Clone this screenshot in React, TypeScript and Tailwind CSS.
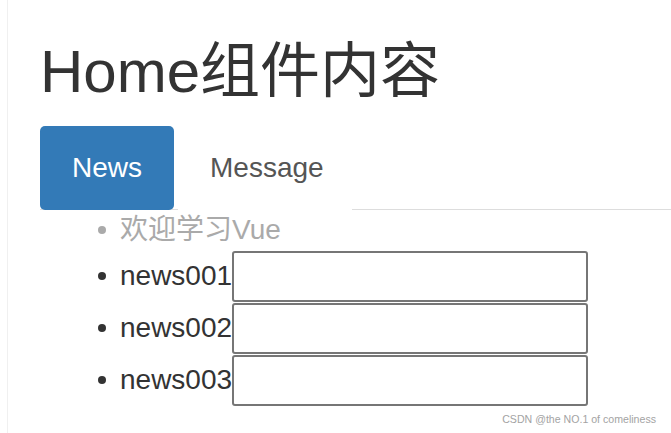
import React from "react";

export default function App() {
  const items = ["news001", "news002", "news003"];
  return (
    <div
      className="relative w-[671px] h-[433px] overflow-hidden bg-white text-[#333]"
      style={{ fontFamily: '"Liberation Sans", "Noto Sans CJK SC", sans-serif' }}
    >
      <div className="ml-[7px] h-full border-l border-[#f0f0f0] pl-[32px] pt-[39px]">
        <h1 className="m-0 h-[66px] text-[60px] leading-[66px] font-normal whitespace-nowrap">
          Home组件内容
        </h1>
        <div className="mt-[21px] flex h-[84px] border-b border-[#ddd]">
          <div className="-mb-px flex h-[84px] items-center rounded-[5px] bg-[#337ab7] px-[32px] text-[28px] leading-[84px] text-white">
            News
          </div>
          <div className="-mb-px ml-[4px] flex h-[84px] items-center bg-white pl-[32px] pr-[28px] text-[28px] leading-[84px] text-[#555]">
            Message
          </div>
        </div>
        <ul className="m-0 p-0 list-none">
          <li className="flex h-[40px] items-center text-[28px] leading-[40px] text-[#aaa]">
            <span className="flex w-[80px] justify-end pr-[14px]">
              <span className="block h-[8px] w-[8px] rounded-full bg-[#aaa]" />
            </span>
            欢迎学习Vue
          </li>
          {items.map((t) => (
            <li key={t} className="flex h-[52px] items-center text-[28px] leading-[40px]">
              <span className="flex w-[80px] justify-end pr-[14px]">
                <span className="block h-[8px] w-[8px] rounded-full bg-[#333]" />
              </span>
              <span className="w-[112px] whitespace-nowrap">{t}</span>
              <input
                type="text"
                className="h-[51px] w-[356px] rounded-[3px] border-2 border-[#767676] bg-white outline-none"
              />
            </li>
          ))}
        </ul>
      </div>
      <div className="absolute bottom-[8px] right-[15px] text-[10.6px] leading-[12px] text-[#a3a3a3]">
        CSDN @the NO.1 of comeliness
      </div>
    </div>
  );
}
